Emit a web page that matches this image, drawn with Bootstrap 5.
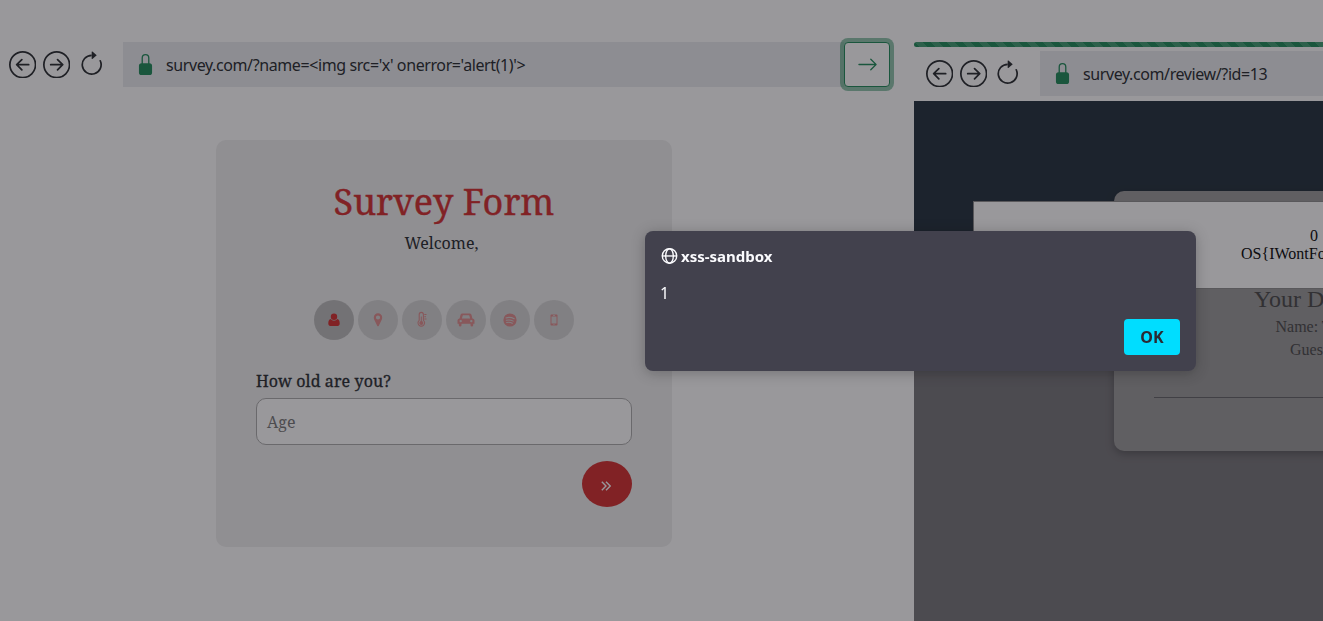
<!DOCTYPE html>
<html lang="en">
<head>
<meta charset="utf-8">
<meta name="viewport" content="width=device-width, initial-scale=1">
<title>xss-sandbox</title>
<link href="https://cdn.jsdelivr.net/npm/bootstrap@5.3.0/dist/css/bootstrap.min.css" rel="stylesheet">
<style>
body{font-family:"Noto Sans",sans-serif;font-size:16px;line-height:1.5;color:#212529;background:#fff;height:621px;overflow:hidden}
svg{display:block;fill:currentColor}
.workspace{height:621px;padding-top:42px}
.pane-left{width:914px;padding-left:9px}
.pane-right{width:409px;overflow:hidden}
.nav-icons{gap:7px;width:114px}
.nav-icons svg{width:27.400px;height:27.400px;margin-right:-.400px}
.url-box{height:45px;background:#e9ecef;padding-left:11.500px;gap:10.500px;white-space:nowrap;letter-spacing:-.400px}
.url-box svg{width:21px;height:21px;color:#198754}
.go-btn{width:46px;height:45px;border-radius:4px;background:#fff;border:1px solid #198754;color:#198754;box-shadow:0 0 0 4px rgba(25,135,84,.5);margin-right:24px;position:relative}
.survey{font-family:"Noto Serif","DejaVu Serif Condensed","DejaVu Serif",serif;width:456px;height:407px;margin:53px 0 0 207px;padding:40px;border-radius:10px;background:#eee}
.survey h1{font-size:36px;line-height:44px;color:#d32828;font-weight:400;margin:0;-webkit-text-stroke:.4px}
.welcome{margin:7px 5px 0 0}
.steps{gap:4px;margin-top:45px}
.step-dot{width:40px;height:40px;border-radius:50%;background:#bbb;color:#d32828;opacity:.5}
.step-dot.current{opacity:1}
.step-dot svg{width:18px;height:18px;margin:0 1px 1px 0}
.age-label{margin-top:29px;line-height:24px;margin-bottom:5px;letter-spacing:.1px;-webkit-text-stroke:.3px}
.age-input{height:47px;border:1px solid #aaa;border-radius:10px;background:#fff;color:#757575;padding:0 10px;letter-spacing:.2px}
.next-btn{width:50px;height:46px;border-radius:50%;background:#d32828;color:#fff;border:0;margin-top:16px}
.right-bar{padding:4px 0 5px 12px}
.stripe{height:5px;border-radius:6px 0 0 6px;background-size:16px 16px}
.review{font-family:"Liberation Serif",serif;background:linear-gradient(#1d2b37 0 200px,#747377 200px);padding:90px 0 0 200px}
.details{height:260px;width:420px;border-radius:10px;background:#979797;color:#444;box-shadow:0 3px 8px rgba(0,0,0,.28);white-space:nowrap;padding:94px 0 0 40px;line-height:23px}
.details h2{font-size:24px;line-height:29px;margin:0 0 1px 100px;font-weight:400}
.details hr{margin:36px 0 0;border-top:1px solid #606063;opacity:1}
.leak{left:59px;top:100px;width:360px;height:88px;background:#fff;border:1px solid #8a8a8a;color:#000;line-height:18px;padding-top:25px;white-space:nowrap}
.veil{inset:0;background:rgba(28,27,34,.45)}
.prompt-box{left:645px;top:231px;width:551px;height:140px;border-radius:8px;background:#42414d;color:#fbfbfe;padding:16px;box-shadow:0 2px 14px rgba(0,0,0,.25)}
.prompt-title{font-weight:700;font-size:15px;line-height:18px;gap:3px}
.ok-btn{width:56px;height:36px;border:0;border-radius:4px;background:#0df;color:#2b2a33;font-weight:700;font-size:16px;padding:0}
</style>
</head>
<body>
<svg class="d-none" aria-hidden="true">
<symbol id="back" viewBox="0 0 16 16"><path fill-rule="evenodd" d="M1 8a7 7 0 1 0 14 0A7 7 0 0 0 1 8zm15 0A8 8 0 1 1 0 8a8 8 0 0 1 16 0zm-4.5-.5a.5.5 0 0 1 0 1H5.707l2.147 2.146a.5.5 0 0 1-.708.708l-3-3a.5.5 0 0 1 0-.708l3-3a.5.5 0 1 1 .708.708L5.707 7.5H11.5z"/></symbol>
<symbol id="forward" viewBox="0 0 16 16"><path fill-rule="evenodd" d="M1 8a7 7 0 1 0 14 0A7 7 0 0 0 1 8zm15 0A8 8 0 1 1 0 8a8 8 0 0 1 16 0zM4.5 7.5a.5.5 0 0 0 0 1h5.793l-2.147 2.146a.5.5 0 0 0 .708.708l3-3a.5.5 0 0 0 0-.708l-3-3a.5.5 0 1 0-.708.708L10.293 7.5H4.5z"/></symbol>
<symbol id="reload" viewBox="0 0 16 16"><path fill-rule="evenodd" d="M8 3a5 5 0 1 0 4.546 2.914.5.5 0 0 1 .908-.417A6 6 0 1 1 8 2v1z"/><path d="M8 4.466V.534a.25.25 0 0 1 .41-.192l2.36 1.966c.12.1.12.284 0 .384L8.41 4.658A.25.25 0 0 1 8 4.466z"/></symbol>
<symbol id="lock" viewBox="0 0 16 16"><path d="M8 1a2 2 0 0 1 2 2v4H6V3a2 2 0 0 1 2-2zm3 6V3a3 3 0 0 0-6 0v4a2 2 0 0 0-2 2v5a2 2 0 0 0 2 2h6a2 2 0 0 0 2-2V9a2 2 0 0 0-2-2z"/></symbol>
</svg>
<div class="workspace d-flex">
  <main class="pane-left flex-shrink-0">
    <div class="d-flex align-items-center">
      <div class="nav-icons d-flex flex-shrink-0"><svg><use href="#back"/></svg><svg><use href="#forward"/></svg><svg style="margin-left:1px"><use href="#reload"/></svg></div>
      <div class="url-box d-flex align-items-center flex-grow-1"><svg><use href="#lock"/></svg><span>survey.com/?name=&lt;img src='x' onerror='alert(1)'&gt;</span></div>
      <button class="go-btn d-flex align-items-center justify-content-center p-0" aria-label="Go"><svg width="21" height="21" viewBox="0 0 16 16"><path d="M1 8a.5.5 0 0 1 .5-.5h11.793l-3.147-3.146a.5.5 0 0 1 .708-.708l4 4a.5.5 0 0 1 0 .708l-4 4a.5.5 0 0 1-.708-.708L13.293 8.5H1.5A.5.5 0 0 1 1 8z"/></svg></button>
    </div>
    <section class="survey">
      <h1 class="text-center">Survey Form</h1>
      <div class="welcome text-center">Welcome,</div>
      <div class="steps d-flex justify-content-center">
        <div class="step-dot current d-flex align-items-center justify-content-center"><svg viewBox="0 0 18 18"><circle cx="9" cy="5.7" r="3.2"/><path d="M5.600 8.100C4 8.600 3.300 10.300 3.300 12.500c0 1.500.8 2.500 2 2.500h7.400c1.200 0 2-1 2-2.500 0-2.200-.7-3.900-2.300-4.400a4.200 4.200 0 0 1-6.800 0z"/></svg></div>
        <div class="step-dot d-flex align-items-center justify-content-center"><svg viewBox="0 0 18 18"><path fill-rule="evenodd" d="M9 2.300a4.200 4.200 0 0 0-4.200 4.200c0 1 .2 1.500.5 2.200l2.900 6.100c.3.700 1.300.7 1.600 0l2.900-6.100c.3-.7.5-1.200.5-2.200A4.200 4.200 0 0 0 9 2.300zm0 2.100a2.100 2.100 0 1 1 0 4.200 2.100 2.100 0 0 1 0-4.200z"/></svg></div>
        <div class="step-dot d-flex align-items-center justify-content-center"><svg viewBox="0 0 18 18"><path d="M6.200 9.300V3.500a2.100 2.100 0 0 1 4.200 0v5.800a3.300 3.300 0 1 1-4.200 0z" fill="none" stroke="currentColor" stroke-width="1.100"/><circle cx="8.300" cy="12.100" r="2"/><path d="M7.800 5.500h1v6h-1zM11.300 3h2.200v1h-2.200zM11.300 5.200h1.700v1h-1.700zM11.300 7.400h2.200v1h-2.200z"/></svg></div>
        <div class="step-dot d-flex align-items-center justify-content-center"><svg viewBox="0 0 18 18"><path fill-rule="evenodd" d="M5.500 2.500h7c1.100 0 1.700.5 2 1.500l.9 3.500c1.200.1 2.100.9 2.100 2.100v3.200h-1.300v1.400a1.300 1.300 0 0 1-2.700 0v-1.400h-9v1.400a1.300 1.300 0 0 1-2.700 0v-1.400H.5V9.600c0-1.200.9-2 2.100-2.100L3.500 4c.3-1 .9-1.500 2-1.500zm.3 1.700-.9 3.200h8.200l-.9-3.200zM3.700 8.900a1.200 1.200 0 1 0 0 2.400 1.200 1.200 0 0 0 0-2.400zm10.600 0a1.200 1.200 0 1 0 0 2.400 1.200 1.200 0 0 0 0-2.400z"/></svg></div>
        <div class="step-dot d-flex align-items-center justify-content-center"><svg viewBox="0 0 18 18"><circle cx="9" cy="9" r="6.600"/><path d="M4.900 6.900c2.600-.8 5.900-.5 8.300.9M5.300 9.300c2.300-.6 4.900-.3 7 .8M5.600 11.500c2-.4 4-.2 5.800.8" fill="none" stroke="#bbb" stroke-width="1.050" stroke-linecap="round"/></svg></div>
        <div class="step-dot d-flex align-items-center justify-content-center"><svg viewBox="0 0 18 18"><path fill-rule="evenodd" d="M6.500 3.500h5c.6 0 1 .4 1 1v9c0 .6-.4 1-1 1h-5c-.6 0-1-.4-1-1v-9c0-.6.4-1 1-1zm0 2v7h5v-7zm2.500 7.500a.55.55 0 1 0 0 1.100.55.55 0 0 0 0-1.100zM8 4.100v.6h2v-.6z"/></svg></div>
      </div>
      <div class="age-label">How old are you?</div>
      <div class="age-input d-flex align-items-center">Age</div>
      <button class="next-btn d-flex align-items-center justify-content-center ms-auto p-0" aria-label="Next"><svg width="10" height="10" viewBox="0 0 10 10" style="margin-top:3px;margin-right:2px"><path d="M.8.700 5 5 .8 9.300M5 .7 9.200 5 5 9.300" fill="none" stroke="#fff" stroke-width="1.400"/></svg></button>
    </section>
  </main>
  <aside class="pane-right d-flex flex-column">
    <div class="progress-bar progress-bar-striped bg-success stripe flex-shrink-0"></div>
    <div class="right-bar d-flex align-items-center">
      <div class="nav-icons d-flex flex-shrink-0"><svg><use href="#back"/></svg><svg><use href="#forward"/></svg><svg><use href="#reload"/></svg></div>
      <div class="url-box d-flex align-items-center flex-grow-1"><svg><use href="#lock"/></svg><span>survey.com/review/?id=13</span></div>
    </div>
    <div class="review position-relative flex-grow-1">
      <div class="details">
        <h2>Your D</h2>
        <div style="padding-left:121.500px">Name: T</div>
        <div style="padding-left:136px">Gues</div>
        <hr>
      </div>
      <div class="leak position-absolute"><div style="padding-left:336px">0</div><div style="padding-left:267px">OS{IWontFo</div></div>
    </div>
  </aside>
</div>
<div class="veil position-fixed" style="z-index:5"></div>
<div class="prompt-box position-fixed d-flex flex-column" style="z-index:6" role="alertdialog">
  <div class="prompt-title d-flex align-items-center"><svg width="17" height="17" viewBox="0 0 16 16" stroke="#fbfbfe" stroke-width="1.300" style="fill:none"><circle cx="8" cy="7.500" r="6.800"/><ellipse cx="8" cy="7.500" rx="3.600" ry="6.800"/><path d="M1 7.500h14"/></svg><span>xss-sandbox</span></div>
  <div style="margin:16px 0 0 -1px">1</div>
  <button class="ok-btn ms-auto mt-auto">OK</button>
</div>
<script src="https://cdn.jsdelivr.net/npm/bootstrap@5.3.0/dist/js/bootstrap.bundle.min.js"></script>
</body>
</html>
